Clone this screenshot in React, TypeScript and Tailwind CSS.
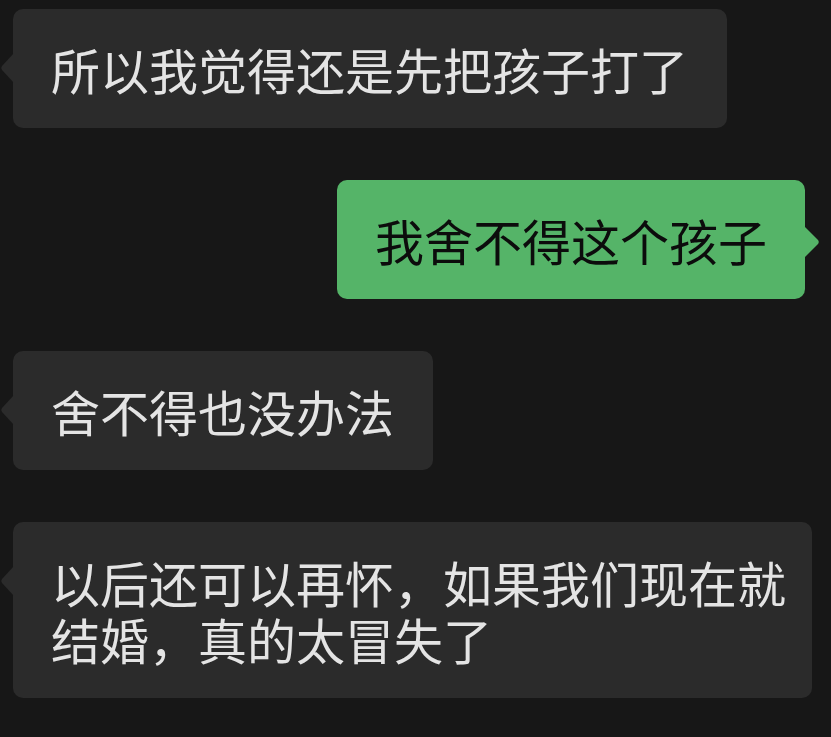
import React from "react";

const font = { fontFamily: '"Noto Sans CJK SC", "Noto Sans", sans-serif' };

function Left({ children, className = "" }: { children: React.ReactNode; className?: string }) {
  return (
    <div className={"relative self-start ml-[13px] rounded-[10px] bg-[#2b2b2b] pl-[38px] pr-[39px] py-[31px] text-[49px] leading-[57px] text-[#e4e4e4] " + className}>
      <svg className="absolute left-[-13px] top-[44px]" width="14" height="30" viewBox="0 0 14 30">
        <path d="M14 0 L2 13 Q0.5 15 2 17 L14 30 Z" fill="#2b2b2b" />
      </svg>
      {children}
    </div>
  );
}

function Right({ children }: { children: React.ReactNode }) {
  return (
    <div className="relative self-end mr-[26px] rounded-[10px] bg-[#55b468] px-[38px] py-[31px] text-[49px] leading-[57px] text-[#0c0c0c]">
      <svg className="absolute right-[-15px] top-[46px]" width="16" height="32" viewBox="0 0 16 32">
        <path d="M0 0 L14 14 Q15.5 16 14 18 L0 32 Z" fill="#55b468" />
      </svg>
      {children}
    </div>
  );
}

export default function App() {
  return (
    <div className="w-[831px] h-[737px] overflow-hidden bg-[#171717] flex flex-col pt-[9px] gap-[52px]" style={font}>
      <Left className="whitespace-nowrap">所以我觉得还是先把孩子打了</Left>
      <Right>我舍不得这个孩子</Right>
      <Left className="whitespace-nowrap">舍不得也没办法</Left>
      <Left className="w-[799px] !pr-[20px] whitespace-nowrap">
        <div>以后还可以再怀，如果我们现在就</div>
        <div>结婚，真的太冒失了</div>
      </Left>
    </div>
  );
}
